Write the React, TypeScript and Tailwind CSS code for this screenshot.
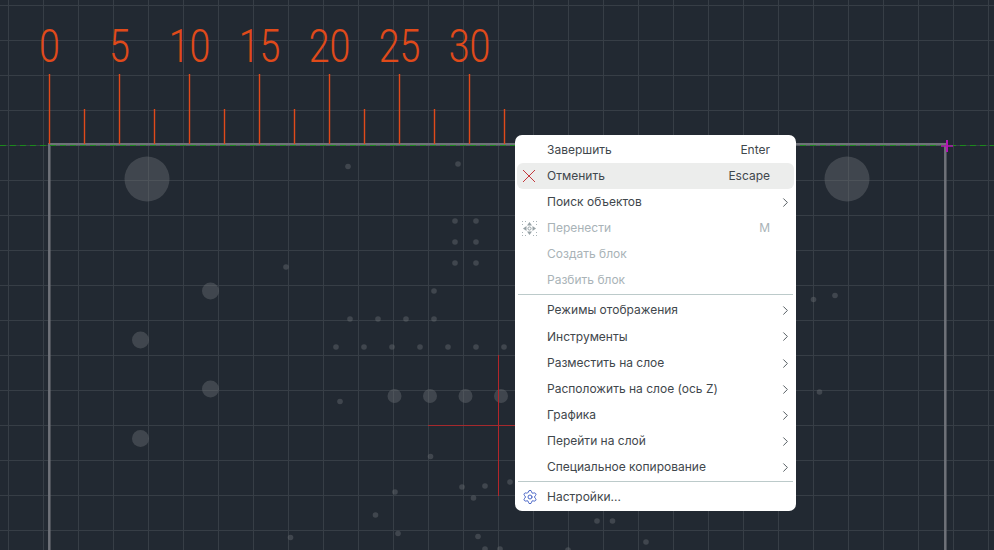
import { ChevronRight, Settings } from 'lucide-react';

const W = 994;
const H = 550;

const vLines = Array.from({ length: 29 }, (_, i) => 8 + i * 35);
const hLines = Array.from({ length: 16 }, (_, i) => 5 + i * 35);
const ticks = Array.from({ length: 14 }, (_, i) => 49.5 + i * 35);
const labels = [0, 5, 10, 15, 20, 25, 30];

const bigPads = [
  [147, 179, 22.5],
  [847, 179, 22.5],
  [210.5, 291, 8.5],
  [140.5, 340, 8.5],
  [210.5, 389, 8.5],
  [140.5, 438.5, 8.5],
  [394.5, 396, 7],
  [430, 396, 7],
  [465.5, 396, 7],
  [501, 396, 7],
];

const vias = [
  [348, 166.5], [458, 164], [455, 221], [476, 221], [455, 242], [476, 242], [455, 263], [476, 263],
  [286, 267], [434, 291], [350, 319], [378, 319], [406, 319], [434, 319],
  [336, 347], [364, 347], [392, 347], [420, 347], [448, 347], [476, 347], [504, 347],
  [340, 401.5], [430.5, 456.5], [462, 487], [485, 486], [473.5, 498], [510, 482],
  [395, 492], [375.5, 515], [290.5, 537.5], [398, 533.5], [478, 536.5], [485, 549], [500, 549],
  [813.5, 299.5], [835, 295.5], [819.5, 392], [597, 521], [612.5, 521], [568, 550], [646, 542],
];

function Board() {
  return (
    <svg width={W} height={H} className="block">
      {vLines.map((x) => (
        <line key={x} x1={x + 0.5} y1={0} x2={x + 0.5} y2={H} stroke="#373e46" strokeWidth={1} />
      ))}
      {hLines.map((y) => (
        <line key={y} x1={0} y1={y + 0.5} x2={W} y2={y + 0.5} stroke="#373e46" strokeWidth={1} />
      ))}

      {bigPads.map(([x, y, r]) => (
        <circle key={`${x}-${y}`} cx={x} cy={y} r={r} fill="#6c6f75" fillOpacity={0.42} />
      ))}
      {vias.map(([x, y]) => (
        <circle key={`${x}-${y}`} cx={x} cy={y} r={2.8} fill="#6c6f75" fillOpacity={0.42} />
      ))}

      {/* board outline */}
      <path d="M49.3 550V144.3H945.3V550" fill="none" stroke="#6f7279" strokeWidth={2.5} />
      <line x1={0} y1={145.5} x2={W} y2={145.5} stroke="#1c8a1c" strokeWidth={1} strokeDasharray="6 4" />

      {/* ruler */}
      {ticks.map((x, i) => (
        <line key={x} x1={x} y1={i % 2 ? 109 : 74} x2={x} y2={144} stroke="#e04a1a" strokeWidth={1.4} />
      ))}
      {labels.map((n, i) => (
        <text
          key={n}
          transform={`translate(${49.5 + i * 70} 62) scale(0.8 1)`}
          textAnchor="middle"
          fontFamily="Roboto, sans-serif"
          fontWeight={300}
          fontSize={47}
          fill="#e04a1a"
        >
          {n}
        </text>
      ))}

      {/* red traces */}
      <line x1={498.5} y1={355} x2={498.5} y2={496} stroke="#b3262a" strokeWidth={1} />
      <line x1={428} y1={425.5} x2={515} y2={425.5} stroke="#a5292d" strokeWidth={1} />

      {/* magenta cross */}
      <line x1={947} y1={140} x2={947} y2={152} stroke="#b414b4" strokeWidth={2} />
      <line x1={941} y1={146} x2={953} y2={146} stroke="#b414b4" strokeWidth={1.5} />
    </svg>
  );
}

function CancelIcon() {
  return (
    <svg width={14} height={14} viewBox="0 0 14 14" className="text-[#c4383c]">
      <path d="M1 1 13 13M13 1 1 13" fill="none" stroke="currentColor" strokeWidth={1} />
    </svg>
  );
}

function MoveIcon() {
  return (
    <svg width={15} height={15} viewBox="0 0 15 15" fill="#97a2a6">
      {/* dotted frame */}
      <path
        d="M0 0h1v1H0zM3 0h1v1H3zM11 0h1v1h-1zM14 0h1v1h-1zM0 3h1v1H0zM14 3h1v1h-1zM0 11h1v1H0zM14 11h1v1h-1zM0 14h1v1H0zM3 14h1v1H3zM11 14h1v1h-1zM14 14h1v1h-1z"
        fill="#a9b3b7"
      />
      <path d="M7.5 1 10 4.5H5Z" />
      <path d="M7.5 14 10 10.5H5Z" />
      <path d="M1 7.5 4.5 5V10Z" />
      <path d="M14 7.5 10.5 5V10Z" />
      <circle cx={7.5} cy={7.5} r={1.6} fill="none" stroke="#97a2a6" strokeWidth={1} />
    </svg>
  );
}

interface RowProps {
  label: string;
  hint?: string;
  icon?: React.ReactNode;
  disabled?: boolean;
  active?: boolean;
  submenu?: boolean;
  className?: string;
}

function Row({ label, hint, icon, disabled, active, submenu, className = 'h-[26px]' }: RowProps) {
  return (
    <div
      className={`flex items-center rounded-md ${className} ${active ? 'bg-[#ecedec]' : ''} ${
        disabled ? 'text-[#a9b3b7]' : 'text-[#3f474c]'
      }`}
    >
      <div className="flex w-[30px] shrink-0 justify-start pl-[5px]">{icon}</div>
      <span className="flex-1">{label}</span>
      {hint && <span className="pr-[24px]">{hint}</span>}
      {submenu && <ChevronRight size={15} strokeWidth={1.5} className="mr-[1px] text-[#4a5257]" />}
    </div>
  );
}

function Divider() {
  return <div className="mx-[1px] h-px shrink-0 bg-[#bccaca]" />;
}

function ContextMenu() {
  return (
    <div className="absolute left-[515px] top-[135px] flex h-[376px] w-[281px] flex-col rounded-[7px] bg-white px-[2px] pt-[2px] font-['Inter',sans-serif] text-[12px]">
      <Row label="Завершить" hint="Enter" />
      <Row label="Отменить" hint="Escape" active icon={<CancelIcon />} />
      <Row label="Поиск объектов" submenu />
      <Row label="Перенести" hint="M" disabled icon={<MoveIcon />} />
      <Row label="Создать блок" disabled />
      <Row label="Разбить блок" disabled />
      <div className="pt-[1px]" />
      <Divider />
      <div className="pt-[2px]" />
      <Row label="Режимы отображения" submenu />
      <Row label="Инструменты" submenu className="h-[27px]" />
      <Row label="Разместить на слое" submenu />
      <Row label="Расположить на слое (ось Z)" submenu />
      <Row label="Графика" submenu />
      <Row label="Перейти на слой" submenu />
      <Row label="Специальное копирование" submenu />
      <div className="pt-[1px]" />
      <Divider />
      <div className="pt-[2px]" />
      <Row label="Настройки..." icon={<Settings size={16} strokeWidth={1.5} className="text-[#4a67c8]" />} />
    </div>
  );
}

export default function App() {
  return (
    <div className="relative h-[550px] w-[994px] overflow-hidden bg-[#222932]">
      <Board />
      <ContextMenu />
    </div>
  );
}
